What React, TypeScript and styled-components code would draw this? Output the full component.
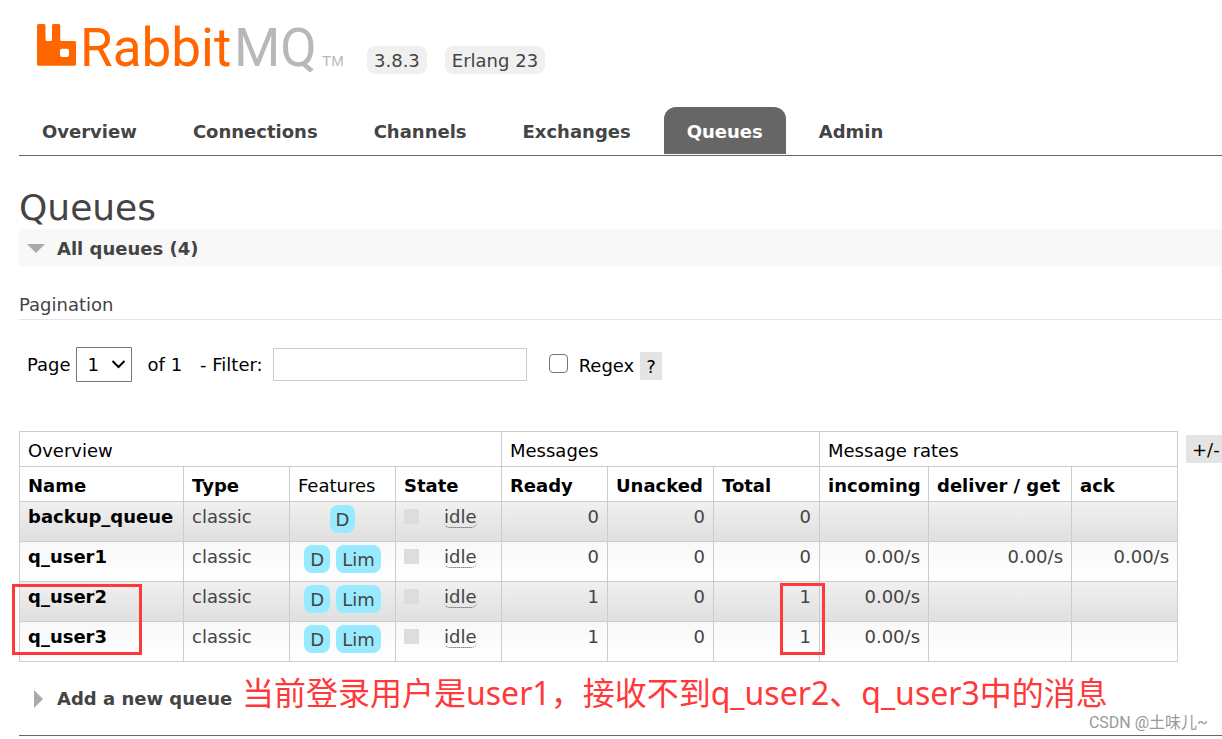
import React from "react";
import styled, { createGlobalStyle } from "styled-components";

const GlobalStyle = createGlobalStyle`
  * { box-sizing: border-box; }
  body {
    margin: 0;
    background: #fff;
    color: #444;
    font-family: "DejaVu Sans", Verdana, sans-serif;
    font-size: 18px;
    line-height: 22px;
    overflow-x: hidden;
  }
`;

const Page = styled.div`
  position: relative;
  padding: 12px 0 3px 19px;
`;

const Header = styled.header`
  display: flex;
  align-items: flex-end;
  gap: 18px;
  padding-left: 18px;
`;

const LogoLink = styled.a`
  display: block;
  margin-right: 4px;
`;

const LogoImage = styled.svg`
  display: block;
  font-family: Roboto, sans-serif;
`;

const Version = styled.span`
  margin-bottom: 8px;
  padding: 4px 7px 2px;
  border-radius: 8px;
  background: #f0f0f0;
`;

const Tabs = styled.nav`
  display: flex;
  gap: 10px;
  margin-top: 25px;
  padding-bottom: 1px;
  border-bottom: 1px solid #666;
`;

const Tab = styled.a<{ $active?: boolean }>`
  padding: 14px 23px 11px;
  border-radius: 12px 12px 0 0;
  background: ${(p) => (p.$active ? "#666" : "transparent")};
  color: ${(p) => (p.$active ? "#fff" : "#444")};
  font-weight: bold;
  text-decoration: none;
`;

const Title = styled.h1`
  margin: 31px 0 0;
  font-size: 36px;
  font-weight: normal;
  line-height: 42px;
`;

const SectionToggle = styled.button<{ $open?: boolean }>`
  display: flex;
  align-items: center;
  width: 100%;
  height: 37px;
  padding: 2px 8px 0;
  border: 0;
  background: ${(p) => (p.$open ? "#f8f8f8" : "transparent")};
  color: #444;
  font: inherit;
  font-weight: bold;
  text-align: left;
`;

const Arrow = styled.svg`
  width: 18px;
  height: 18px;
  margin-right: 12px;
  fill: #aaa;
`;

const SubTitle = styled.h3`
  margin: 28px 0 27px;
  padding-bottom: 3px;
  border-bottom: 1px solid #e4e4e4;
  font-size: 18px;
  font-weight: normal;
`;

const Filters = styled.form`
  display: flex;
  align-items: center;
  padding-left: 8px;
  color: #000;
`;

const Field = styled.label<{ $gap: number }>`
  display: flex;
  align-items: center;
  gap: ${(p) => p.$gap}px;
`;

const SelectBox = styled.span`
  position: relative;
  display: flex;
`;

const Select = styled.select`
  appearance: none;
  width: 56px;
  height: 35px;
  padding: 0 11px;
  border: 1px solid #767676;
  border-radius: 1px;
  background: #fff;
  color: #000;
  font: inherit;
`;

const Chevron = styled.svg`
  position: absolute;
  top: 12px;
  right: 6px;
  pointer-events: none;
`;

const PageCount = styled.span`
  margin: 0 18px 0 16px;
`;

const FilterInput = styled.input`
  width: 254px;
  height: 33px;
  padding: 4px 8px;
  border: 1px solid #ccc;
  font: inherit;
`;

const RegexGroup = styled.div`
  display: flex;
  align-items: center;
  gap: 6px;
  margin-left: 22px;
  padding-top: 2px;
`;

const Checkbox = styled.input`
  appearance: none;
  width: 19px;
  height: 19px;
  margin: 0 0 4px;
  border: 1px solid #767676;
  border-radius: 4px;
  background: #fff;
`;

const SmallButton = styled.button`
  flex: none;
  height: 28px;
  padding: 2px 6px 0;
  border: 0;
  background: #e4e4e4;
  color: #000;
  font: inherit;
`;

const TableArea = styled.div`
  position: relative;
  display: flex;
  align-items: flex-start;
  gap: 8px;
  margin: 49px 0 17px;
`;

const ColumnsButton = styled(SmallButton)`
  margin-top: 4px;
`;

const Table = styled.table`
  flex: none;
  width: 1159px;
  table-layout: fixed;
  border-collapse: collapse;
`;

const Col = styled.col<{ $w: number }>`
  width: ${(p) => p.$w}px;
`;

const HeadCell = styled.th<{ $plain?: boolean }>`
  height: 35px;
  padding: 4px 0 0 8px;
  border: 1px solid #ccc;
  color: #000;
  font-weight: ${(p) => (p.$plain ? "normal" : "bold")};
  text-align: left;
  white-space: nowrap;
`;

const Row = styled.tr<{ $shaded?: boolean }>`
  background: ${(p) =>
    p.$shaded
      ? "linear-gradient(#f0f0f0, #dfdfdf)"
      : "linear-gradient(#f8f8f8, #fff)"};
`;

const Cell = styled.td<{ $align?: string }>`
  height: 40px;
  padding: 4px 8px 0;
  border: 1px solid #ccc;
  text-align: ${(p) => p.$align ?? "left"};
  vertical-align: top;
  white-space: nowrap;
`;

const FeatureCell = styled(Cell)`
  padding-top: 3px;
`;

const QueueLink = styled.a`
  color: #000;
  font-weight: bold;
  text-decoration: none;
`;

const Features = styled.div`
  display: flex;
  justify-content: center;
  gap: 6px;
`;

const Feature = styled.span`
  height: 28px;
  padding: 4px 6px 2px;
  border-radius: 8px;
  background: #98ebff;
`;

const State = styled.div`
  display: flex;
  align-items: flex-start;
  gap: 25px;
`;

const StateMark = styled.span`
  width: 15px;
  height: 15px;
  margin-top: 3px;
  background: #ddd;
`;

const StateName = styled.abbr`
  height: 22px;
  border-bottom: 1px dotted #444;
  border-radius: 6px;
  text-decoration: none;
`;

const Highlight = styled.div<{ $x: number; $y: number; $w: number; $h: number }>`
  position: absolute;
  left: ${(p) => p.$x}px;
  top: ${(p) => p.$y}px;
  width: ${(p) => p.$w}px;
  height: ${(p) => p.$h}px;
  border: 3px solid #ff3939;
  pointer-events: none;
`;

const AddQueue = styled.section`
  position: relative;
  padding-bottom: 19px;
  border-bottom: 1px solid #666;
`;

const Note = styled.p`
  position: absolute;
  left: 223px;
  top: -10px;
  margin: 0;
  color: #ff3939;
  font: 32px/48px "Noto Sans", "Noto Sans CJK SC", sans-serif;
  white-space: nowrap;
`;

const Watermark = styled.span`
  position: absolute;
  right: 14px;
  bottom: 6px;
  color: #999;
  font: 16px/20px Roboto, "Noto Sans CJK SC", sans-serif;
`;

const tabs = ["Overview", "Connections", "Channels", "Exchanges", "Queues", "Admin"];
const columnWidths = [164, 106, 106, 106, 106, 106, 106, 109, 143, 106];
const columns = [
  "Name", "Type", "Features", "State", "Ready",
  "Unacked", "Total", "incoming", "deliver / get", "ack",
];

type Queue = { name: string; features: string[]; counts: number[]; rates: string[] };

const queues: Queue[] = [
  { name: "backup_queue", features: ["D"], counts: [0, 0, 0], rates: ["", "", ""] },
  { name: "q_user1", features: ["D", "Lim"], counts: [0, 0, 0], rates: ["0.00/s", "0.00/s", "0.00/s"] },
  { name: "q_user2", features: ["D", "Lim"], counts: [1, 0, 1], rates: ["0.00/s", "", ""] },
  { name: "q_user3", features: ["D", "Lim"], counts: [1, 0, 1], rates: ["0.00/s", "", ""] },
];

function Logo() {
  return (
    <LogoImage width="308" height="70" viewBox="0 -6 308 70" role="img" aria-label="RabbitMQ">
      <path
        fill="#f60"
        fillRule="evenodd"
        d="M1.5 6H7a1.5 1.5 0 0 1 1.5 1.5V21.5a1.5 1.5 0 0 0 1.5 1.5h3.5a1.5 1.5 0 0 0 1.5-1.5V7.5A1.5 1.5 0 0 1 16.5 6h5.3a1.5 1.5 0 0 1 1.5 1.5V21.5a1.5 1.5 0 0 0 1.5 1.5h12.700A1.5 1.5 0 0 1 39 24.5v21.700a1.5 1.5 0 0 1-1.5 1.5h-36A1.5 1.5 0 0 1 0 46.200V7.5A1.5 1.5 0 0 1 1.5 6zM25 30.700a2 2 0 0 0-2 2V37a2 2 0 0 0 2 2h5a2 2 0 0 0 2-2v-4.300a2 2 0 0 0-2-2z"
      />
      <text x="43" y="48" fontSize="53" fill="#f60">Rabbit</text>
      <text x="197" y="48" fontSize="53" fill="#b8b8b8">MQ</text>
      <text x="285" y="48" fontSize="15" fontFamily="Liberation Sans" fill="#b8b8b8">TM</text>
    </LogoImage>
  );
}

export default function App() {
  return (
    <Page>
      <GlobalStyle />
      <Header>
        <LogoLink href="#/"><Logo /></LogoLink>
        <Version>3.8.3</Version>
        <Version>Erlang 23</Version>
      </Header>
      <Tabs>
        {tabs.map((tab) => (
          <Tab key={tab} href={`#/${tab.toLowerCase()}`} $active={tab === "Queues"}>{tab}</Tab>
        ))}
      </Tabs>

      <main>
        <Title>Queues</Title>
        <SectionToggle type="button" $open aria-expanded="true">
          <Arrow viewBox="0 0 18 18"><path d="M0 4h18l-9 9z" /></Arrow>
          All queues (4)
        </SectionToggle>

        <SubTitle>Pagination</SubTitle>
        <Filters>
          <Field $gap={5}>
            Page
            <SelectBox>
              <Select defaultValue="1"><option value="1">1</option></Select>
              <Chevron width="15" height="11" viewBox="0 0 15 11" fill="none" stroke="#000" strokeWidth="2">
                <path d="M1.5 2l6 6 6-6" />
              </Chevron>
            </SelectBox>
          </Field>
          <PageCount>of 1</PageCount>
          <Field $gap={10}>
            - Filter:
            <FilterInput type="text" />
          </Field>
          <RegexGroup>
            <Field $gap={11}>
              <Checkbox type="checkbox" />
              Regex
            </Field>
            <SmallButton type="button">?</SmallButton>
          </RegexGroup>
        </Filters>

        <TableArea>
          <Table>
            <colgroup>
              {columnWidths.map((w, i) => <Col key={i} $w={w} />)}
            </colgroup>
            <thead>
              <tr>
                <HeadCell colSpan={4} $plain>Overview</HeadCell>
                <HeadCell colSpan={3} $plain>Messages</HeadCell>
                <HeadCell colSpan={3} $plain>Message rates</HeadCell>
              </tr>
              <tr>
                {columns.map((c) => <HeadCell key={c} $plain={c === "Features"}>{c}</HeadCell>)}
              </tr>
            </thead>
            <tbody>
              {queues.map((q, i) => (
                <Row key={q.name} $shaded={i % 2 === 0}>
                  <Cell><QueueLink href={`#/queues/${q.name}`}>{q.name}</QueueLink></Cell>
                  <Cell>classic</Cell>
                  <FeatureCell>
                    <Features>{q.features.map((f) => <Feature key={f}>{f}</Feature>)}</Features>
                  </FeatureCell>
                  <Cell><State><StateMark /><StateName>idle</StateName></State></Cell>
                  {q.counts.map((n, j) => <Cell key={j} $align="right">{n}</Cell>)}
                  {q.rates.map((r, j) => <Cell key={j} $align="right">{r}</Cell>)}
                </Row>
              ))}
            </tbody>
          </Table>
          <ColumnsButton type="button">+/-</ColumnsButton>
          <Highlight $x={-7} $y={153} $w={130} $h={71} />
          <Highlight $x={761} $y={152} $w={45} $h={72} />
        </TableArea>

        <AddQueue>
          <SectionToggle type="button" aria-expanded="false">
            <Arrow viewBox="0 0 18 18"><path d="M7 0v18l9-9z" /></Arrow>
            Add a new queue
          </SectionToggle>
          <Note>当前登录用户是user1，接收不到q_user2、q_user3中的消息</Note>
        </AddQueue>
      </main>
      <Watermark>CSDN @土味儿~</Watermark>
    </Page>
  );
}
